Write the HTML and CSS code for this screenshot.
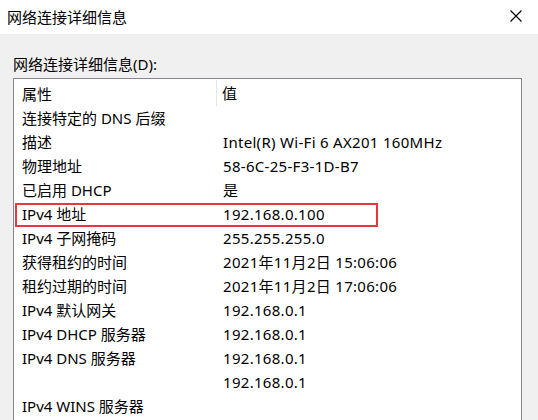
FILE: index.html
```html
<!DOCTYPE html>
<html lang="zh-CN">
<head>
<meta charset="utf-8">
<title>网络连接详细信息</title>
<link rel="stylesheet" href="styles.css">
</head>
<body>
<div class="window">
  <div class="titlebar">
    <span class="title">网络连接详细信息</span>
    <svg class="close" width="12" height="12" viewBox="0 0 12 12"><path d="M0.5 0.5L11.5 11.5M11.5 0.5L0.5 11.5" stroke="#000" stroke-width="1.1" fill="none"/></svg>
  </div>
  <div class="content">
    <div class="label">网络连接详细信息(D):</div>
    <div class="list">
      <div class="row header">
        <div class="cell prop">属性</div>
        <div class="cell val">值</div>
      </div>
      <div class="row"><div class="cell prop">连接特定的 DNS 后缀</div><div class="cell val"></div></div>
      <div class="row"><div class="cell prop">描述</div><div class="cell val">Intel(R) Wi-Fi 6 AX201 160MHz</div></div>
      <div class="row"><div class="cell prop">物理地址</div><div class="cell val">58-6C-25-F3-1D-B7</div></div>
      <div class="row"><div class="cell prop">已启用 DHCP</div><div class="cell val">是</div></div>
      <div class="row marked"><div class="cell prop">IPv4 地址</div><div class="cell val">192.168.0.100</div><span class="mark"></span></div>
      <div class="row"><div class="cell prop">IPv4 子网掩码</div><div class="cell val">255.255.255.0</div></div>
      <div class="row"><div class="cell prop">获得租约的时间</div><div class="cell val">2021年11月2日 15:06:06</div></div>
      <div class="row"><div class="cell prop">租约过期的时间</div><div class="cell val">2021年11月2日 17:06:06</div></div>
      <div class="row"><div class="cell prop">IPv4 默认网关</div><div class="cell val">192.168.0.1</div></div>
      <div class="row"><div class="cell prop">IPv4 DHCP 服务器</div><div class="cell val">192.168.0.1</div></div>
      <div class="row"><div class="cell prop">IPv4 DNS 服务器</div><div class="cell val">192.168.0.1</div></div>
      <div class="row"><div class="cell prop"></div><div class="cell val">192.168.0.1</div></div>
      <div class="row"><div class="cell prop">IPv4 WINS 服务器</div><div class="cell val"></div></div>
    </div>
  </div>
</div>
</body>
</html>
```

FILE: styles.css
```css
html, body {
  margin: 0;
  padding: 0;
}
body {
  width: 538px;
  height: 420px;
  overflow: hidden;
  background: #f0f0f0;
  font-family: "Noto Sans", "Noto Sans CJK SC", sans-serif;
  font-size: 15px;
  color: #000;
}
.window {
  display: flex;
  flex-direction: column;
}
.titlebar {
  height: 34px;
  background: #fff;
  display: flex;
  align-items: center;
  justify-content: space-between;
  padding: 0 16px 0 7px;
}
.title {
  font-size: 15px;
  line-height: 20px;
  margin-top: -1px;
}
.close {
  display: block;
  margin-top: -2px;
}
.content {
  padding: 0 16px 0 13px;
}
.label {
  margin-top: 20px;
  line-height: 20px;
  height: 20px;
}
.list {
  margin-top: 4px;
  width: 507px;
  height: 400px;
  border: 1px solid #828790;
  background: #fff;
  overflow: hidden;
}
.row {
  position: relative;
  display: grid;
  grid-template-columns: 203px 1fr;
  height: 24px;
  align-items: center;
  white-space: nowrap;
}
.row.header {
  height: 27px;
  align-items: stretch;
}
.cell {
  line-height: 24px;
}
.cell.prop {
  padding-left: 8px;
}
.cell.val {
  padding-left: 6px;
  letter-spacing: 0.3px;
}
.header .cell {
  line-height: 26px;
  padding-top: 1px;
}
.header .prop {
  border-right: 1px solid #e5e5e5;
  margin: 1px 0 1px 0;
  line-height: 24px;
  padding-top: 2px;
  height: 24px;
}
.header .val {
  padding-left: 5px;
}
.mark {
  position: absolute;
  left: 1px;
  top: 1px;
  width: 363px;
  height: 24px;
  box-sizing: border-box;
  border: 2px solid #e8383b;
  pointer-events: none;
}
```
